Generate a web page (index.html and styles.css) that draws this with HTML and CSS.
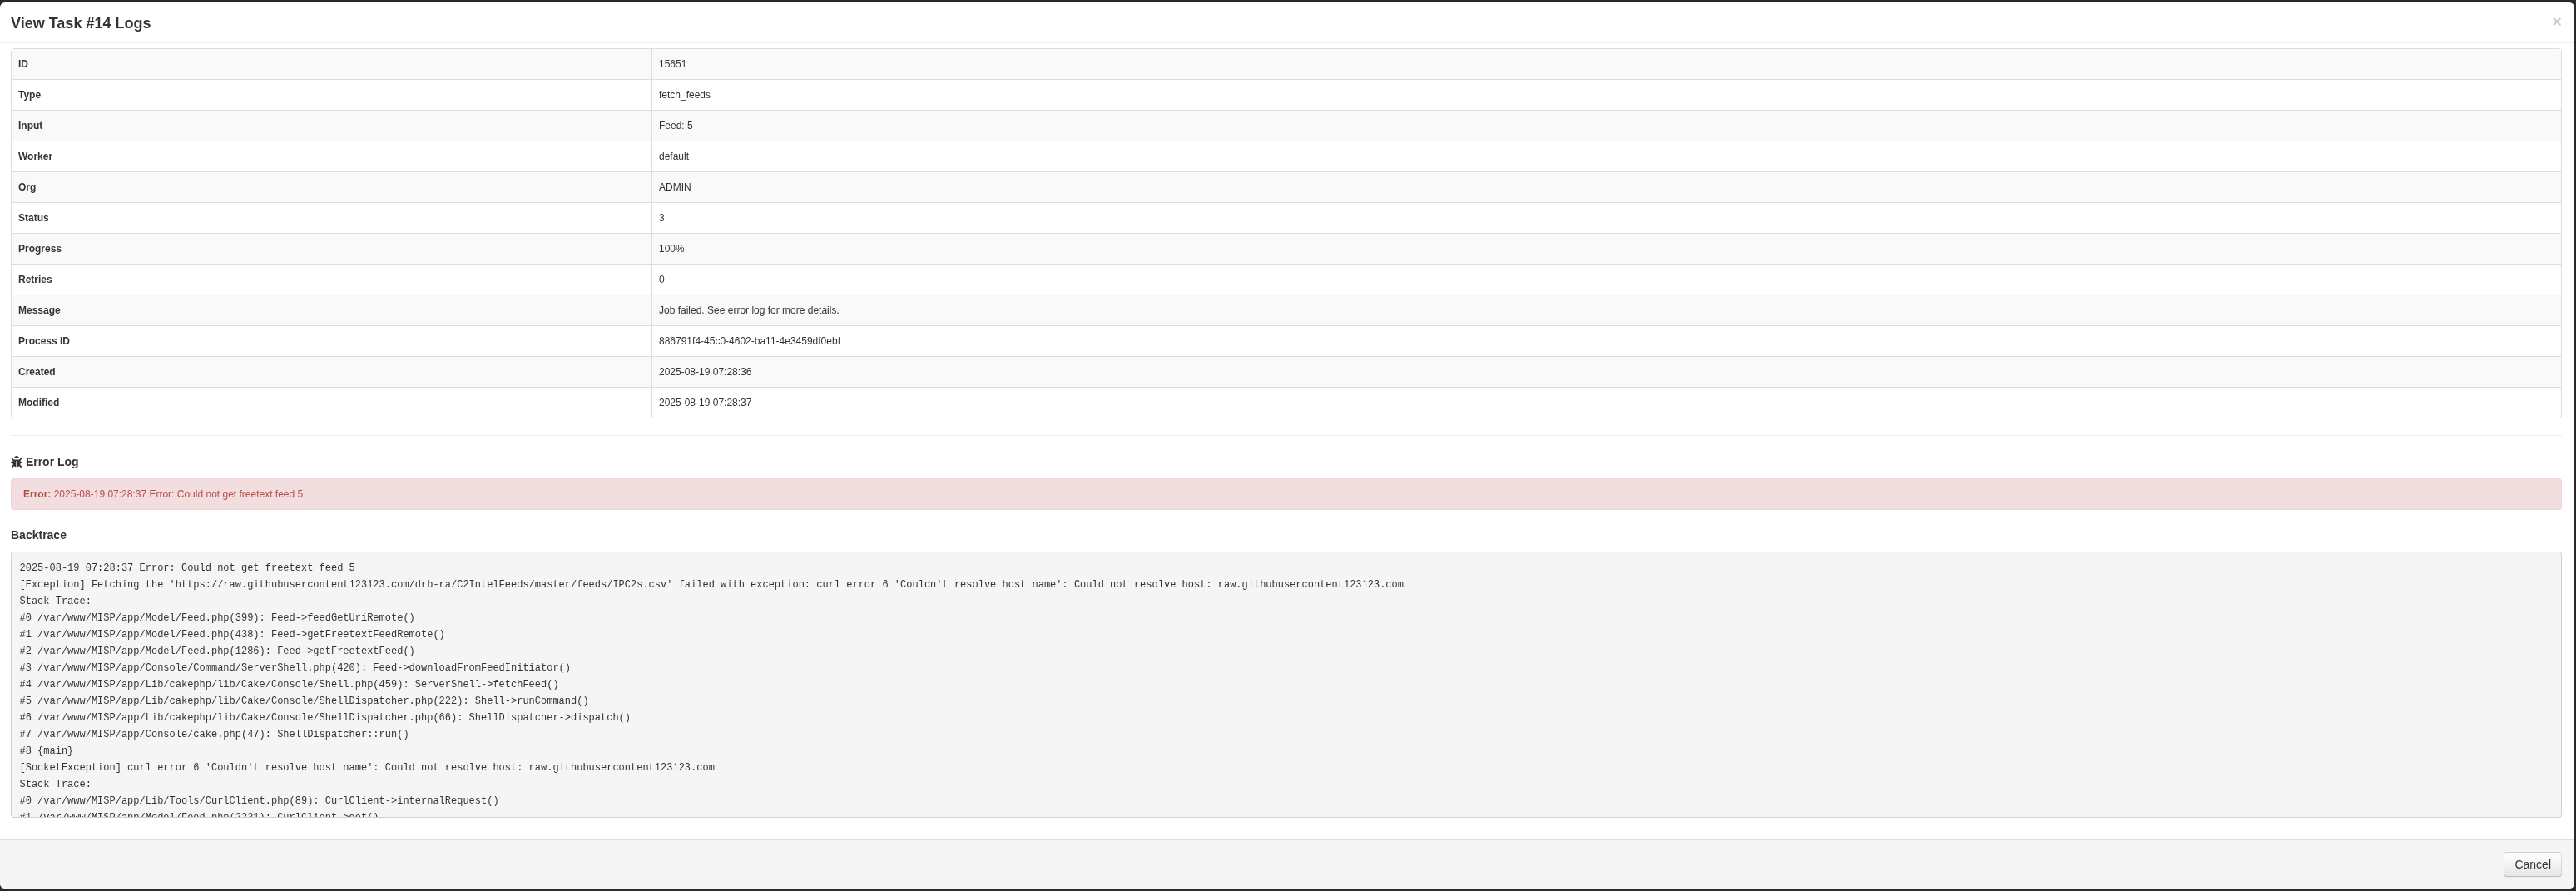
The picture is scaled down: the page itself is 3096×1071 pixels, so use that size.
FILE: index.html
```html
<!DOCTYPE html>
<html lang="en">
<head>
<meta charset="utf-8">
<title>View Task #14 Logs</title>
<link rel="stylesheet" href="styles.css">
</head>
<body>
<div class="modal">
  <header class="modal-header">
    <button class="close" type="button">×</button>
    <h3 class="modal-title">View Task #14 Logs</h3>
  </header>
  <main class="modal-body">
    <table class="details">
      <tbody>
        <tr><th>ID</th><td>15651</td></tr>
        <tr><th>Type</th><td>fetch_feeds</td></tr>
        <tr><th>Input</th><td>Feed: 5</td></tr>
        <tr><th>Worker</th><td>default</td></tr>
        <tr><th>Org</th><td>ADMIN</td></tr>
        <tr><th>Status</th><td>3</td></tr>
        <tr><th>Progress</th><td>100%</td></tr>
        <tr><th>Retries</th><td>0</td></tr>
        <tr><th>Message</th><td>Job failed. See error log for more details.</td></tr>
        <tr><th>Process ID</th><td>886791f4-45c0-4602-ba11-4e3459df0ebf</td></tr>
        <tr><th>Created</th><td>2025-08-19 07:28:36</td></tr>
        <tr><th>Modified</th><td>2025-08-19 07:28:37</td></tr>
      </tbody>
    </table>
    <hr class="divider">
    <h4 class="section-title"><svg class="bug" viewBox="0 0 512 512" aria-hidden="true"><path d="M511.988 288.9c-.478 17.43-15.217 31.1-32.653 31.1H424v16c0 21.864-4.882 42.584-13.6 61.145l60.228 60.228c12.496 12.497 12.496 32.758 0 45.255-12.498 12.497-32.759 12.496-45.256 0l-54.736-54.736C345.886 467.965 314.351 480 280 480V236c0-6.627-5.373-12-12-12h-24c-6.627 0-12 5.373-12 12v244c-34.351 0-65.886-12.035-90.636-32.108l-54.736 54.736c-12.497 12.497-32.758 12.496-45.256 0-12.496-12.497-12.496-32.758 0-45.255l60.228-60.228C92.882 378.584 88 357.864 88 336v-16H32.666C15.23 320 .491 306.33.013 288.9-.484 270.816 14.028 256 32 256h56v-58.745l-46.628-46.628c-12.496-12.497-12.496-32.758 0-45.255 12.498-12.497 32.758-12.497 45.256 0L141.255 160h229.489l54.627-54.627c12.498-12.497 32.758-12.497 45.256 0 12.496 12.497 12.496 32.758 0 45.255L424 197.255V256h56c17.972 0 32.484 14.816 31.988 32.9zM257 0c-61.856 0-112 50.144-112 112h224C369 50.144 318.856 0 257 0z"/></svg> Error Log</h4>
    <div class="alert"><strong>Error:</strong> 2025-08-19 07:28:37 Error: Could not get freetext feed 5</div>
    <h4 class="section-title">Backtrace</h4>
    <pre class="trace">2025-08-19 07:28:37 Error: Could not get freetext feed 5
[Exception] Fetching the 'https://raw.githubusercontent123123.com/drb-ra/C2IntelFeeds/master/feeds/IPC2s.csv' failed with exception: curl error 6 'Couldn't resolve host name': Could not resolve host: raw.githubusercontent123123.com
Stack Trace:
#0 /var/www/MISP/app/Model/Feed.php(399): Feed->feedGetUriRemote()
#1 /var/www/MISP/app/Model/Feed.php(438): Feed->getFreetextFeedRemote()
#2 /var/www/MISP/app/Model/Feed.php(1286): Feed->getFreetextFeed()
#3 /var/www/MISP/app/Console/Command/ServerShell.php(420): Feed->downloadFromFeedInitiator()
#4 /var/www/MISP/app/Lib/cakephp/lib/Cake/Console/Shell.php(459): ServerShell->fetchFeed()
#5 /var/www/MISP/app/Lib/cakephp/lib/Cake/Console/ShellDispatcher.php(222): Shell->runCommand()
#6 /var/www/MISP/app/Lib/cakephp/lib/Cake/Console/ShellDispatcher.php(66): ShellDispatcher->dispatch()
#7 /var/www/MISP/app/Console/cake.php(47): ShellDispatcher::run()
#8 {main}
[SocketException] curl error 6 'Couldn't resolve host name': Could not resolve host: raw.githubusercontent123123.com
Stack Trace:
#0 /var/www/MISP/app/Lib/Tools/CurlClient.php(89): CurlClient->internalRequest()
#1 /var/www/MISP/app/Model/Feed.php(2221): CurlClient->get()
#2 /var/www/MISP/app/Model/Feed.php(399): Feed->feedGetUri()</pre>
  </main>
  <footer class="modal-footer">
    <button class="btn" type="button">Cancel</button>
  </footer>
</div>
</body>
</html>
```

FILE: styles.css
```css
* { box-sizing: border-box; }
html, body { height: 100%; }
body {
  margin: 0;
  padding: 3px 2px 3px 0;
  background: #2a2a2a;
  color: #333;
  font: 12px/20px "Liberation Sans", Arial, sans-serif;
  overflow: hidden;
}
.modal {
  height: 100%;
  display: flex;
  flex-direction: column;
  background: #fff;
  border-radius: 6px;
  overflow: hidden;
  will-change: transform;
}
.modal-header {
  flex: none;
  height: 49px;
  padding: 10px 13px 8px;
  border-bottom: 1px solid #eee;
}
.modal-title {
  margin: 0;
  font-size: 18px;
  line-height: 30px;
  font-weight: bold;
}
.close {
  float: right;
  margin: 3px 2px 0 0;
  padding: 0;
  border: 0;
  background: none;
  color: #000;
  opacity: .2;
  font: bold 20px/20px "Liberation Sans", Arial, sans-serif;
}
.modal-body {
  flex: 1;
  min-height: 0;
  padding: 6px 15px 26px 13px;
}
.details {
  width: 100%;
  table-layout: fixed;
  border-collapse: separate;
  border-spacing: 0;
  border: 1px solid #ddd;
  border-radius: 4px;
}
.details th, .details td {
  padding: 8px;
  border-top: 1px solid #ddd;
  text-align: left;
  vertical-align: top;
}
.details th { width: 769px; font-weight: bold; }
.details td { border-left: 1px solid #ddd; }
.details tr:first-child th, .details tr:first-child td { border-top: 0; }
.details tr:nth-child(odd) th, .details tr:nth-child(odd) td { background: #f9f9f9; }
.divider {
  height: 1px;
  margin: 20px 0 21px;
  border: 0;
  background: #eee;
}
.section-title {
  margin: 0 0 10px;
  font-size: 14px;
  line-height: 20px;
  font-weight: bold;
}
.bug {
  width: 14px;
  height: 14px;
  vertical-align: -2px;
  fill: #333;
}
.alert {
  height: 38px;
  margin-bottom: 20px;
  padding: 8px 14px;
  border: 1px solid #eed3d7;
  border-radius: 4px;
  background: #f2dede;
  color: #b94a48;
}
.trace {
  height: 320px;
  margin: 0;
  padding: 9px 9.5px;
  overflow: hidden;
  border: 1px solid rgba(0, 0, 0, .15);
  border-radius: 4px;
  background: #f5f5f5;
  color: #333;
  font: 12px/20px "Liberation Mono", "Courier New", monospace;
  white-space: pre-wrap;
}
.modal-footer {
  flex: none;
  height: 59px;
  padding: 14px 15px 15px;
  border-top: 1px solid #ddd;
  background: #f5f5f5;
  text-align: right;
}
.btn {
  height: 30px;
  padding: 4px 12px;
  border: 1px solid #bbb;
  border-color: rgba(0, 0, 0, .1) rgba(0, 0, 0, .1) rgba(0, 0, 0, .25);
  border-radius: 4px;
  background: linear-gradient(to bottom, #fff, #e6e6e6);
  box-shadow: inset 0 1px 0 rgba(255, 255, 255, .2), 0 1px 2px rgba(0, 0, 0, .05);
  color: #333;
  font: 14px/20px "Liberation Sans", Arial, sans-serif;
  text-shadow: 0 1px 1px rgba(255, 255, 255, .75);
}
```
